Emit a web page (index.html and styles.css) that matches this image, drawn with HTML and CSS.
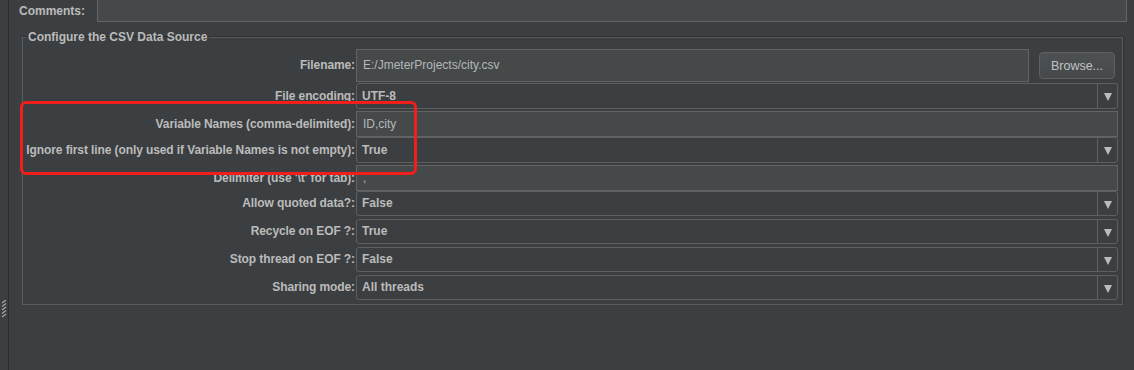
FILE: index.html
```html
<!DOCTYPE html>
<html lang="en">
<head>
    <meta charset="UTF-8">
    <title>CSV Data Set Config</title>
    <link rel="stylesheet" href="styles.css">
</head>
<body>
    <div class="shell">
        <!-- Splitter strip on the left -->
        <div class="splitter">
            <svg class="grip" width="6" height="18" viewBox="0 0 6 18">
                <g stroke="#a8abad" stroke-width="1.2">
                    <line x1="1" y1="3" x2="5" y2="0"/>
                    <line x1="1" y1="6.5" x2="5" y2="3.5"/>
                    <line x1="1" y1="10" x2="5" y2="7"/>
                    <line x1="1" y1="13.5" x2="5" y2="10.5"/>
                    <line x1="1" y1="17" x2="5" y2="14"/>
                </g>
            </svg>
        </div>

        <div class="main">
            <div class="comments-row">
                <label class="lbl">Comments:</label>
                <div class="text-field comments-field"></div>
            </div>

            <fieldset class="csv-box">
                <legend>Configure the CSV Data Source</legend>
                <div class="form-grid">
                    <label class="lbl">Filename:</label>
                    <div class="file-row">
                        <div class="text-field tall">E:/JmeterProjects/city.csv</div>
                        <button class="browse">Browse...</button>
                    </div>

                    <label class="lbl">File encoding:</label>
                    <div class="combo"><span>UTF-8</span><i class="arrow"></i></div>

                    <label class="lbl">Variable Names (comma-delimited):</label>
                    <div class="text-field">ID,city</div>

                    <label class="lbl">Ignore first line (only used if Variable Names is not empty):</label>
                    <div class="combo"><span>True</span><i class="arrow"></i></div>

                    <label class="lbl">Delimiter (use '\t' for tab):</label>
                    <div class="text-field">,</div>

                    <label class="lbl short">Allow quoted data?:</label>
                    <div class="combo short"><span>False</span><i class="arrow"></i></div>

                    <label class="lbl short">Recycle on EOF ?:</label>
                    <div class="combo short"><span>True</span><i class="arrow"></i></div>

                    <label class="lbl short">Stop thread on EOF ?:</label>
                    <div class="combo short"><span>False</span><i class="arrow"></i></div>

                    <label class="lbl short">Sharing mode:</label>
                    <div class="combo short"><span>All threads</span><i class="arrow"></i></div>
                </div>
            </fieldset>
        </div>
    </div>

    <!-- annotation drawn over the form -->
    <div class="highlight"></div>
</body>
</html>
```

FILE: styles.css
```css
/* Darcula-ish JMeter panel */
body {
    margin: 0;
    background: #3c3f41;
    color: #bbbbbb;
    font-family: "Liberation Sans", Arial, sans-serif;
    font-size: 12px;
    height: 370px;
    overflow: hidden;
}

.shell {
    display: flex;
    height: 370px;
}

.splitter {
    width: 8px;
    border-right: 1px solid #2b2d2f;
    display: flex;
    flex-direction: column;
    align-items: center;
}

.grip {
    margin-top: 300px;
}

.main {
    flex: 1;
}

.comments-row {
    display: grid;
    grid-template-columns: auto 1fr;
    column-gap: 12px;
    align-items: center;
    padding-left: 10px;
    margin-right: 7px;
}

.lbl {
    font-weight: bold;
    text-align: right;
    white-space: nowrap;
    line-height: 26px;
    letter-spacing: -0.1px;
}

.comments-row .lbl {
    line-height: 20px;
    letter-spacing: 0;
}

.text-field {
    background: #45494a;
    border: 1px solid #646464;
    height: 24px;
    line-height: 24px;
    padding-left: 6px;
    color: #b4b8bb;
    box-sizing: content-box;
}

.comments-field {
    height: 21px;
    border-top: none;
}

.text-field.tall {
    flex: 1;
    height: 31px;
    line-height: 31px;
}

.csv-box {
    margin: 8px 11px 0 13px;
    padding: 4px 0 4px 0;
    border: 1px solid #5a5d5f;
    box-shadow: 1px -1px 0 #2e3032;
    min-width: 0;
}

.csv-box legend {
    font-weight: bold;
    line-height: 15px;
    padding: 0 2px;
    margin-left: 3px;
}

.form-grid {
    display: grid;
    grid-template-columns: 332px 1fr;
    grid-template-rows: 34px 28px 26px 28px 26px 28px 28px 28px 25px;
    column-gap: 1px;
    padding-right: 4px;
}

.form-grid > * {
    align-self: start;
}

.form-grid .lbl:first-child {
    line-height: 33px;
}

.lbl.short {
    line-height: 25px;
}

.file-row {
    display: flex;
    align-items: center;
    gap: 10px;
}

.browse {
    width: 76px;
    height: 27px;
    margin-right: 3px;
    background: linear-gradient(#4d5153, #45494b);
    border: 1px solid #5e6163;
    border-radius: 4px;
    color: #c0c3c5;
    font-family: inherit;
    font-size: 12.5px;
    padding: 0;
}

.combo {
    display: flex;
    height: 24px;
    border: 1px solid #5e6060;
    border-radius: 3px;
    box-sizing: content-box;
}

.combo.short {
    height: 23px;
}

.combo span {
    flex: 1;
    font-weight: bold;
    padding-left: 5px;
    line-height: 24px;
}

.combo.short span {
    line-height: 23px;
}

.arrow {
    width: 19px;
    border-left: 1px solid #5e6060;
    position: relative;
}

.arrow::after {
    content: "";
    position: absolute;
    left: 6px;
    top: 50%;
    margin-top: -3px;
    border-left: 4px solid transparent;
    border-right: 4px solid transparent;
    border-top: 8px solid #b9bcbe;
}

.highlight {
    position: absolute;
    left: 20px;
    top: 101px;
    width: 391px;
    height: 68px;
    border: 3px solid #f01f1c;
    border-radius: 6px;
}
```
